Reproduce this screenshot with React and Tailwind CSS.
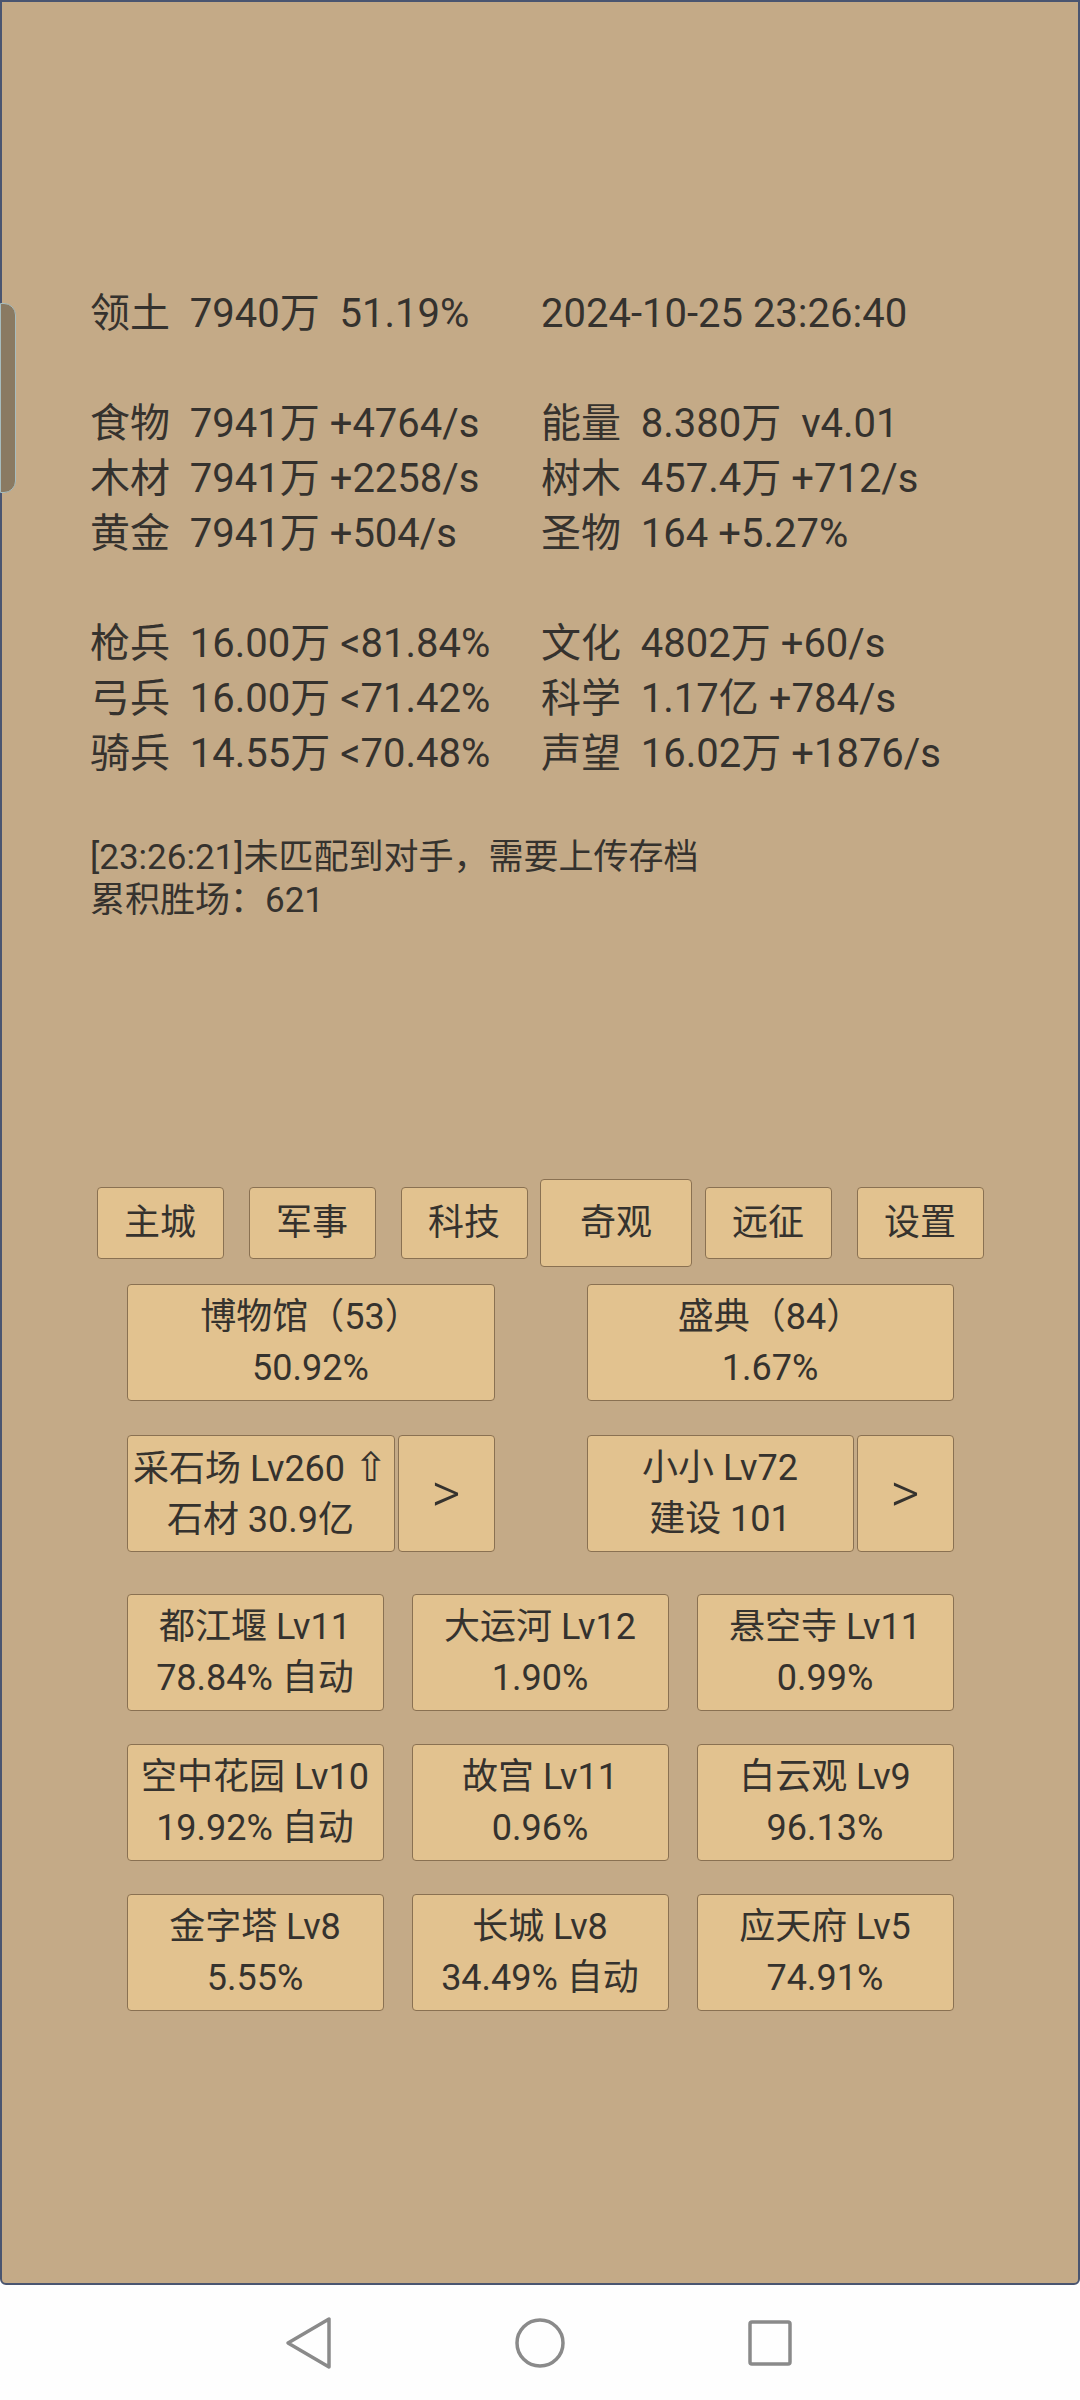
const stats = [
  ["领土  7940万  51.19%", "2024-10-25 23:26:40"],
  null,
  ["食物  7941万 +4764/s", "能量  8.380万  v4.01"],
  ["木材  7941万 +2258/s", "树木  457.4万 +712/s"],
  ["黄金  7941万 +504/s", "圣物  164 +5.27%"],
  null,
  ["枪兵  16.00万 <81.84%", "文化  4802万 +60/s"],
  ["弓兵  16.00万 <71.42%", "科学  1.17亿 +784/s"],
  ["骑兵  14.55万 <70.48%", "声望  16.02万 +1876/s"],
  null,
];

const tabs = ["主城", "军事", "科技", "奇观", "远征", "设置"];

const wonders = [
  ["都江堰 Lv11", "78.84% 自动"],
  ["大运河 Lv12", "1.90%"],
  ["悬空寺 Lv11", "0.99%"],
  ["空中花园 Lv10", "19.92% 自动"],
  ["故宫 Lv11", "0.96%"],
  ["白云观 Lv9", "96.13%"],
  ["金字塔 Lv8", "5.55%"],
  ["长城 Lv8", "34.49% 自动"],
  ["应天府 Lv5", "74.91%"],
];

const btn =
  "flex flex-col items-center justify-center border border-[#8a7152] rounded-[4px] bg-[#e2c28f] text-[36px] leading-[51px]";

const Card = ({ top, bottom, active, className = "" }) => (
  <div className={`${btn} ${active ? "bg-[#c4a274]" : ""} ${className}`}>
    <div className="whitespace-pre">{top}</div>
    <div className="whitespace-pre">{bottom}</div>
  </div>
);

const Arrow = () => (
  <div className={`${btn} w-[97px] h-[117px] text-[56px] font-light`}>&gt;</div>
);

export default function App() {
  return (
    <div className="w-[1080px] h-[2400px] flex flex-col bg-[#fefefe] text-[#35322e] font-['Roboto','Noto_Sans_CJK_SC',sans-serif]">
      <div className="relative h-[2285px] border-2 border-[#4a5570] rounded-b-[6px] bg-[#c4aa87] flex flex-col">
        {/* side handle */}
        <div className="absolute left-[-2px] top-[301px] w-[16px] h-[190px] bg-[#8a7a62] border border-[#a7bcbd] rounded-r-[12px]" />

        <div className="mt-[284px] pl-[88px] grid grid-cols-[451px_1fr] text-[40px] leading-[55px]">
          {stats.map((r, i) =>
            r ? (
              <div key={i} className="contents">
                <div className="whitespace-pre">{r[0]}</div>
                <div className="whitespace-pre">{r[1]}</div>
              </div>
            ) : (
              <div key={i} className="col-span-2 h-[55px]" />
            )
          )}
        </div>

        <div className="pl-[88px] text-[35px] leading-[43px]">
          <div>[23:26:21]未匹配到对手，需要上传存档</div>
          <div>累积胜场：621</div>
        </div>

        <div className="mt-[257px] flex justify-center h-[88px]">
          {tabs.map((t) => (
            <div key={t} className="w-[152px] flex items-center justify-center">
              {t === "奇观" ? (
                <div className={`${btn} w-[153px] h-[88px] text-[36px] border-[#6f5a3e]`}>{t}</div>
              ) : (
                <div className={`${btn} w-[127px] h-[72px] text-[30px]`}>{t}</div>
              )}
            </div>
          ))}
        </div>

        <div className="w-[827px] mx-auto mt-[17px] flex flex-col">
          <div className="flex justify-between">
            <Card top="博物馆（53）" bottom="50.92%" active className="w-[368px] h-[117px]" />
            <Card top="盛典（84）" bottom="1.67%" className="w-[367px] h-[117px]" />
          </div>

          <div className="flex justify-between mt-[34px]">
            <div className="flex gap-[3px]">
              <Card
                top={<>采石场 Lv260 <span className="font-['DejaVu_Sans'] font-light text-[40px]">⇧</span></>}
                bottom="石材 30.9亿"
                className="w-[268px] h-[117px]"
              />
              <Arrow />
            </div>
            <div className="flex gap-[3px]">
              <Card top="小小 Lv72" bottom="建设 101" className="w-[267px] h-[117px]" />
              <Arrow />
            </div>
          </div>

          <div className="grid grid-cols-3 gap-x-[28px] gap-y-[33px] mt-[42px]">
            {wonders.map(([a, b]) => (
              <Card key={a} top={a} bottom={b} className="h-[117px]" />
            ))}
          </div>
        </div>
      </div>

      <div className="flex-1 flex items-center justify-center gap-[170px]">
        <svg width="60" height="60" viewBox="0 0 60 60">
          <path d="M49 6 L49 54 L8 30 Z" fill="none" stroke="#8a8a8a" strokeWidth="3.5" strokeLinejoin="round" />
        </svg>
        <svg width="60" height="60" viewBox="0 0 60 60">
          <circle cx="30" cy="30" r="23" fill="none" stroke="#8a8a8a" strokeWidth="3.5" />
        </svg>
        <svg width="60" height="60" viewBox="0 0 60 60">
          <rect x="10" y="9" width="40" height="42" rx="2" fill="none" stroke="#8a8a8a" strokeWidth="3.5" />
        </svg>
      </div>
    </div>
  );
}
